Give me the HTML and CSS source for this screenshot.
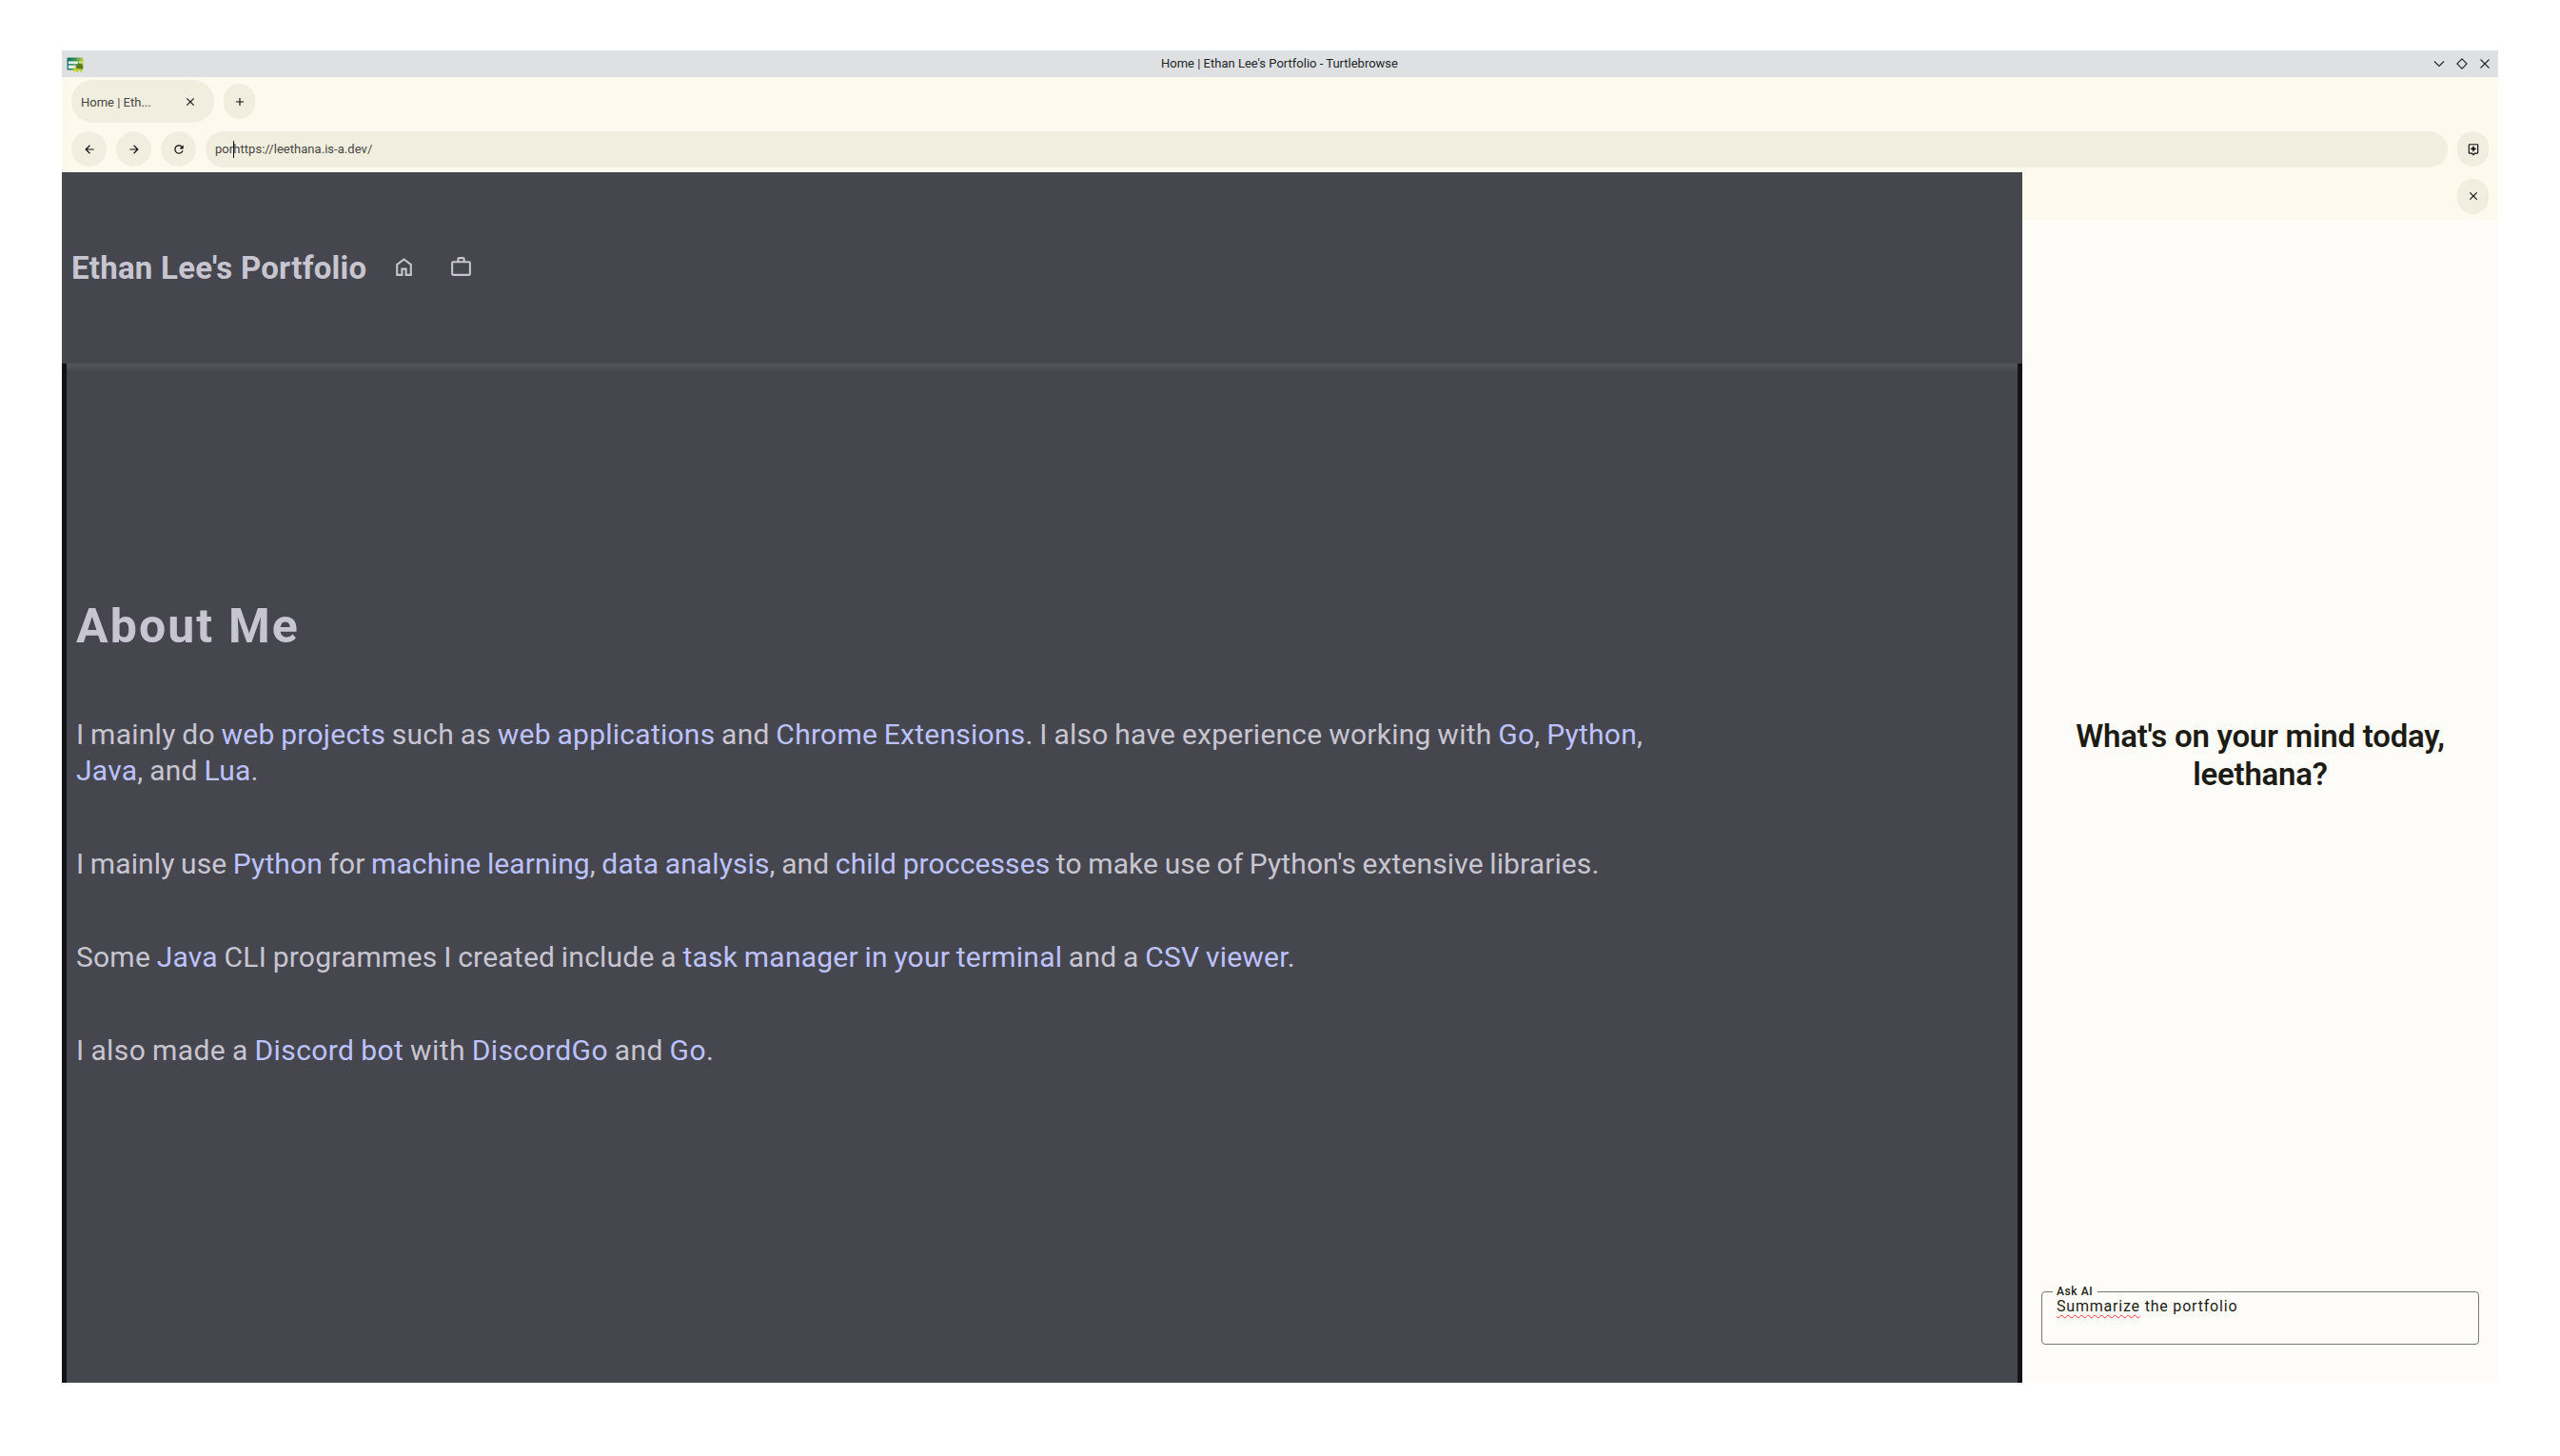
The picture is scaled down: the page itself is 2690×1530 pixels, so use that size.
FILE: index.html
```html
<!DOCTYPE html>
<html lang="en">
<head>
<meta charset="UTF-8">
<title>Home | Ethan Lee's Portfolio - Turtlebrowse</title>
<link rel="stylesheet" href="styles.css">
</head>
<body>

<div class="window">
  <div class="titlebar">
    <svg class="app-icon" viewBox="0 0 18 16">
      <defs>
        <linearGradient id="frame" x1="0" x2="1" y1="0" y2="0">
          <stop offset="0" stop-color="#087060"/>
          <stop offset="0.5" stop-color="#3f9058"/>
          <stop offset="1" stop-color="#bcd23c"/>
        </linearGradient>
      </defs>
      <rect x="0.5" y="0.5" width="17" height="13" rx="1" fill="url(#frame)"/>
      <rect x="1.8" y="4.4" width="10" height="2.8" fill="#e4f0ea"/>
      <rect x="1.8" y="8.6" width="8" height="3.4" fill="#e4f0ea"/>
      <rect x="13" y="4.4" width="3.4" height="2" fill="#d6e6a0"/>
      <circle cx="13.6" cy="10.3" r="3.6" fill="#5d7c22"/>
      <path d="M7 12.5c0-2 3-2.500 3.500-0.500l5.500 0.500v3h-2v-1.500h-1.500v2h-2v-1.500h-1.500v1h-1.500z" fill="#bdd331"/>
    </svg>
    <span class="window-title">Home | Ethan Lee's Portfolio - Turtlebrowse</span>
    <div class="window-controls">
      <svg viewBox="0 0 12 12"><path d="M1 3.500l5 5 5-5"/></svg>
      <svg viewBox="0 0 12 12"><path d="M6 0.900l5.100 5.100L6 11.100 0.900 6z"/></svg>
      <svg viewBox="0 0 12 12"><path d="M1.500 1.500l9 9M10.500 1.500l-9 9"/></svg>
    </div>
  </div>

  <div class="tabs">
    <div class="tab">
      <span>Home | Eth...</span>
      <svg class="icon" viewBox="0 0 24 24"><path d="M19 6.410L17.590 5 12 10.590 6.410 5 5 6.410 10.590 12 5 17.590 6.410 19 12 13.410 17.590 19 19 17.590 13.410 12z"/></svg>
    </div>
    <button class="btn narrow"><svg class="icon" viewBox="0 0 24 24"><path d="M19 13h-6v6h-2v-6H5v-2h6V5h2v6h6v2z"/></svg></button>
  </div>

  <div class="toolbar">
    <button class="btn"><svg class="icon" viewBox="0 0 24 24"><path d="M20 11H7.830l5.590-5.590L12 4l-8 8 8 8 1.410-1.410L7.830 13H20v-2z"/></svg></button>
    <button class="btn"><svg class="icon" viewBox="0 0 24 24"><path d="M12 4l-1.410 1.410L16.170 11H4v2h12.170l-5.580 5.590L12 20l8-8z"/></svg></button>
    <button class="btn"><svg class="icon" viewBox="0 0 24 24"><path d="M17.650 6.350C16.200 4.900 14.210 4 12 4c-4.420 0-7.990 3.580-7.990 8s3.570 8 7.990 8c3.730 0 6.840-2.550 7.730-6h-2.080c-.82 2.330-3.040 4-5.650 4-3.310 0-6-2.690-6-6s2.690-6 6-6c1.660 0 3.140.69 4.220 1.780L13 11h7V4l-2.350 2.350z"/></svg></button>
    <div class="url">por<span class="caret"></span>https://leethana.is-a.dev/</div>
    <button class="btn narrow"><svg class="icon" viewBox="0 0 24 24"><path d="M19 2H5c-1.100 0-2 .9-2 2v14c0 1.100.9 2 2 2h4l3 3 3-3h4c1.100 0 2-.9 2-2V4c0-1.100-.9-2-2-2zm0 16h-4.830L12 20.170 9.830 18H5V4h14v14zm-7-1l1.880-4.120L18 11l-4.120-1.880L12 5l-1.880 4.120L6 11l4.120 1.880z"/></svg></button>
  </div>

  <div class="main">
    <div class="page">
      <header class="site-header">
        <h1>Ethan Lee's Portfolio</h1>
        <svg class="nav-icon" viewBox="0 0 24 24"><path d="M6 19h3v-6h6v6h3v-9l-6-4.500L6 10v9zm-2 2V9l8-6 8 6v12h-7v-6h-2v6H4z"/></svg>
        <svg class="nav-icon" viewBox="0 0 24 24"><path d="M4 21c-1.100 0-2-.9-2-2V8c0-1.100.9-2 2-2h4V4c0-1.100.9-2 2-2h4c1.100 0 2 .9 2 2v2h4c1.100 0 2 .9 2 2v11c0 1.100-.9 2-2 2H4zm0-2h16V8H4v11zm6-13h4V4h-4v2z"/></svg>
      </header>
      <section class="about">
        <h2>About Me</h2>
        <p class="skills">I mainly do <a>web projects</a> such as <a>web applications</a> and <a>Chrome Extensions</a>. I also have experience working with <a>Go</a>, <a>Python</a>,<br><a>Java</a>, and <a>Lua</a>.</p>
        <p class="python">I mainly use <a>Python</a> for <a>machine learning</a>, <a>data analysis</a>, and <a>child proccesses</a> to make use of Python's extensive libraries.</p>
        <p class="java">Some <a>Java</a> CLI programmes I created include a <a>task manager in your terminal</a> and a <a>CSV viewer</a>.</p>
        <p class="discord">I also made a <a>Discord bot</a> with <a>DiscordGo</a> and <a>Go</a>.</p>
      </section>
    </div>

    <aside class="ai">
      <div class="ai-bar">
        <button class="btn narrow"><svg class="icon" viewBox="0 0 24 24"><path d="M19 6.410L17.590 5 12 10.590 6.410 5 5 6.410 10.590 12 5 17.590 6.410 19 12 13.410 17.590 19 19 17.590 13.410 12z"/></svg></button>
      </div>
      <div class="greeting">What's on your mind today,<br>leethana?</div>
      <fieldset class="ask">
        <legend>Ask AI</legend>
        <div class="ask-text"><span class="misspelled">Summarize</span> the portfolio</div>
      </fieldset>
    </aside>
  </div>
</div>

</body>
</html>
```
FILE: styles.css
```css
* { box-sizing: border-box; }
body { margin: 0; padding: 53px 65px 0; background: #fff; font-family: Roboto, "Open Sans", sans-serif; }

.window { width: 2560px; height: 1400px; display: flex; flex-direction: column; background: #fdf9ec; }

/* title bar */
.titlebar { height: 28px; flex: none; display: grid; grid-template-columns: 1fr auto 1fr; align-items: center; padding: 0 8px 0 5px; background: #dee0e2; }
.app-icon { width: 18px; height: 16px; display: block; margin-top: 1px; }
.window-title { padding: 0 0 2px 2px; font-size: 13px; color: #232629; }
.window-controls { display: flex; gap: 12px; justify-content: flex-end; }
.window-controls svg { width: 12px; height: 12px; fill: none; stroke: #232629; stroke-width: 1.1; }

/* tabs and address bar */
.tabs { height: 51px; flex: none; display: flex; align-items: center; gap: 10px; padding: 0 10px; }
.tab { width: 150px; height: 45px; display: flex; align-items: center; justify-content: space-between; padding: 0 18px 0 10px; border-radius: 23px; background: #f1eee0; font-size: 13px; color: #47473f; }
.tab span { padding-top: 1px; }
.toolbar { height: 49px; flex: none; display: flex; align-items: center; gap: 10px; padding: 0 10px; }
.btn { width: 37px; height: 37px; flex: none; display: flex; align-items: center; justify-content: center; padding: 0; border: none; border-radius: 19px; background: #f1eee0; }
.narrow { width: 33px; border-radius: 17px; }
.icon { width: 14px; height: 14px; fill: #111; }
.url { flex: 1; height: 38px; line-height: 37px; padding-left: 10px; border-radius: 19px; background: #f1eee0; font-size: 13px; letter-spacing: 0.04px; color: #47473f; }
.caret { display: inline-block; width: 1px; height: 18px; margin-right: -1px; vertical-align: -5px; background: #111; }

.main { flex: 1; min-height: 0; display: flex; }

/* web page */
.page { width: 2060px; display: flex; flex-direction: column; background: #46464f; color: #c7c5d0; }
.site-header { height: 201px; flex: none; display: flex; align-items: center; padding: 0 0 2px 10px; }
.site-header h1 { margin: 1px 27px 0 0; font-size: 33px; font-weight: 700; letter-spacing: 0.25px; }
.nav-icon { width: 25px; height: 25px; margin-right: 35px; fill: #c7c5d0; }
.about { flex: 1; padding: 244px 10px 0; border: solid #111318; border-width: 0 5px; background: linear-gradient(#55555f, #46464f 9px); }
.about h2 { margin: 0 0 63px; font-size: 50px; line-height: 64px; font-weight: 700; letter-spacing: 2.1px; }
.about p { margin: 0 0 60px; font-size: 30px; line-height: 38px; word-spacing: -1px; white-space: nowrap; }
.about a { color: #bcc2ff; }
.about .skills { letter-spacing: 0.25px; }
.about .python { letter-spacing: 0.11px; }
.about .java { letter-spacing: 0.22px; }
.about .discord { letter-spacing: 0.4px; }

/* assistant panel */
.ai { flex: 1; display: flex; flex-direction: column; background: #fefcf8; }
.ai-bar { height: 50px; flex: none; display: flex; align-items: center; justify-content: flex-end; padding-right: 10px; background: #fdf9ec; }
.greeting { flex: 1; display: flex; align-items: center; justify-content: center; padding-top: 7px; text-align: center; font-size: 33px; line-height: 40px; font-weight: 600; letter-spacing: -0.25px; color: #1c1c14; }
.ask { height: 63px; margin: 0 20px 40px 20px; padding: 0 15px; border: 1px solid #78786a; border-radius: 4px; color: #1c1c14; }
.ask legend { margin-left: -4px; padding: 0 5px 0 4px; font-size: 12px; line-height: 14px; font-weight: 500; letter-spacing: 0.6px; }
.ask-text { margin-top: -1px; font-size: 16px; line-height: 20px; letter-spacing: 0.8px; }
.misspelled { text-decoration: underline wavy #f33 1px; text-underline-offset: 3px; text-decoration-skip-ink: none; }
```
